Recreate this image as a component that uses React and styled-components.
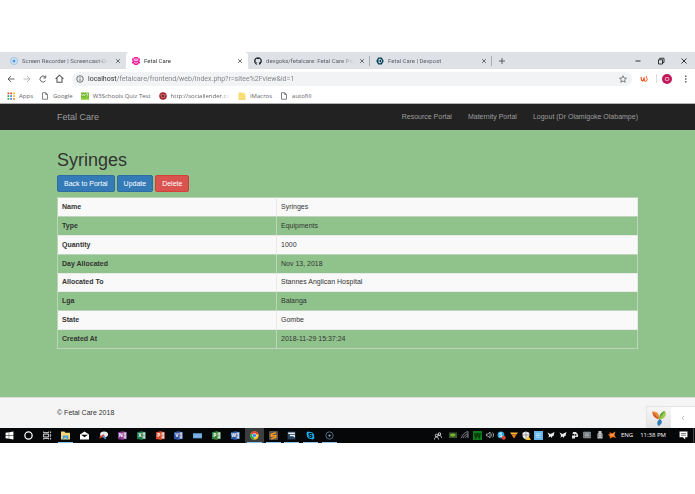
import React from 'react';
import styled, { createGlobalStyle, css } from 'styled-components';
import { FaGithub, FaWindows, FaSkype } from 'react-icons/fa';

const GlobalStyle = createGlobalStyle`
  * {
    box-sizing: border-box;
  }
  body {
    margin: 0;
    background: #fff;
  }
  svg {
    display: block;
    flex: none;
  }
  button {
    margin: 0;
    padding: 0;
    border: 0;
    background: none;
    font: inherit;
    color: inherit;
  }
  a {
    color: inherit;
    text-decoration: none;
  }
`;

const uiFont = '"Open Sans", "Noto Sans", sans-serif';
const narrowFont = 'Roboto, "Open Sans", sans-serif';
const pageFont = '"Liberation Sans", Arial, sans-serif';

const Screen = styled.div`
  display: flex;
  flex-direction: column;
  min-height: 100vh;
  padding: 52px 0 51px;
`;

/* browser window */

const Browser = styled.header`
  font-family: ${uiFont};
  font-size: 6px;
  line-height: 10px;
  color: #5f6368;
  border-bottom: 1px solid #b4b4b4;
`;

const TabStrip = styled.div`
  display: flex;
  align-items: stretch;
  height: 17px;
  padding-left: 4px;
  background: #dee1e6;
  font-family: ${narrowFont};
`;

const Tab = styled.div`
  display: flex;
  align-items: center;
  gap: 4px;
  width: 122px;
  padding: 0 4px 0 6px;
  border-radius: 4px 4px 0 0;
  ${(p) => p.$active && css`
    background: #fff;
    color: #3c4043;
  `}
  ${(p) => p.$divider && css`
    border-radius: 0;
    background: linear-gradient(#a9adb2, #a9adb2) right center / 1px 10px no-repeat;
  `}
`;

const FadeText = styled.span`
  flex: 1;
  min-width: 0;
  white-space: nowrap;
  mask-image: linear-gradient(to right, #000 85%, transparent);
`;

const IconButton = styled.button`
  display: flex;
  align-items: center;
  justify-content: center;
  width: ${(p) => p.$w || 16}px;
  color: ${(p) => p.$color || '#505357'};
`;

const WindowControls = styled.div`
  display: flex;
  margin-left: auto;
`;

const Toolbar = styled.div`
  display: flex;
  align-items: center;
  height: 19px;
  padding-left: 3px;
`;

const AddressBar = styled.div`
  flex: 1;
  display: flex;
  align-items: center;
  gap: 4px;
  height: 14px;
  margin-left: 5px;
  padding: 0 1px 0 4px;
  border-radius: 7px;
  background: #f1f3f4;
`;

/* the host is darker than the path */
const Address = styled.input`
  flex: 1;
  min-width: 0;
  padding: 0;
  border: 0;
  outline: 0;
  background: linear-gradient(to right, #303134 29px, #7d8186 29px);
  background-clip: text;
  font-family: ${narrowFont};
  font-size: 7px;
  line-height: 10px;
  color: transparent;
`;

const Separator = styled.span`
  width: 1px;
  height: 9px;
  background: #dadce0;
`;

const Avatar = styled.span`
  display: flex;
  align-items: center;
  justify-content: center;
  width: 10px;
  height: 10px;
  border-radius: 50%;
  background: #c2185b;
  color: #fff;
`;

const Bookmarks = styled.nav`
  display: flex;
  align-items: center;
  gap: 8px;
  height: 15px;
  padding-left: 7px;
`;

const Bookmark = styled.a`
  display: flex;
  align-items: center;
  gap: 4px;
  white-space: nowrap;
`;

/* site */

const Site = styled.div`
  flex: 1;
  display: flex;
  flex-direction: column;
  background: #90c38b;
  font-family: ${pageFont};
  font-size: 7px;
  line-height: 10px;
  color: #333;
`;

const Navbar = styled.nav`
  display: flex;
  align-items: center;
  gap: 16px;
  height: 26px;
  padding: 0 57px;
  background: #222;
  color: #9d9d9d;
`;

const Brand = styled.a`
  margin-right: auto;
  font-size: 9px;
`;

const Content = styled.main`
  flex: 1;
  padding: 20px 57px;
`;

const Title = styled.h1`
  margin: 0 0 5px;
  font-size: 18px;
  font-weight: 400;
  line-height: 20px;
`;

const Actions = styled.div`
  display: flex;
  gap: 2px;
  margin-bottom: 5px;
`;

const Button = styled.button`
  height: 17px;
  padding: 0 6px;
  border: 1px solid ${(p) => (p.$danger ? '#d43f3a' : '#2e6da4')};
  border-radius: 2px;
  background: ${(p) => (p.$danger ? '#d9534f' : '#337ab7')};
  color: #fff;
`;

const DetailTable = styled.table`
  width: 100%;
  height: 152px;
  border-collapse: collapse;

  th,
  td {
    padding: 0 4px;
    border: 1px solid rgba(221, 221, 221, 0.6);
    text-align: left;
  }
  th {
    width: 219px;
  }
  tr:nth-child(odd) {
    background: #f9f9f9;
  }
`;

const Footer = styled.footer`
  display: flex;
  align-items: flex-end;
  justify-content: space-between;
  height: 31px;
  padding-left: 57px;
  border-top: 1px solid #ddd;
  background: #f5f5f5;
`;

const Copyright = styled.p`
  margin: 0;
  padding-bottom: 10px;
`;

const DebugBar = styled.div`
  display: flex;
  height: 22px;
  border: 1px solid #e4e4e4;
  border-width: 1px 0 0 1px;
  background: #fff;
`;

const DebugLogo = styled.a`
  display: flex;
  align-items: center;
  justify-content: center;
  width: 24px;
  background: linear-gradient(#f7f7f7, #e2e2e2);
`;

/* windows taskbar */

const Taskbar = styled.footer`
  display: flex;
  justify-content: space-between;
  height: 15px;
  background: #060708;
  color: #fff;
  font-family: ${uiFont};
  font-size: 6px;
  line-height: 15px;
`;

const Pinned = styled.div`
  display: grid;
  grid-template-columns: repeat(18, 1fr);
  width: 339px;
`;

const TaskButton = styled.button`
  display: flex;
  align-items: center;
  justify-content: center;
  height: 15px;
  background: ${(p) => (p.$active ? '#3b3d3f' : 'none')};
  ${(p) => p.$open && css`
    background-image: linear-gradient(#8fc3ea, #8fc3ea);
    background-size: 15px 1px;
    background-position: center bottom;
    background-repeat: no-repeat;
  `}
`;

const Tray = styled.div`
  display: flex;
  align-items: center;
`;

const TrayIcons = styled.div`
  display: grid;
  grid-template-columns: repeat(14, 1fr);
  justify-items: center;
  width: 171px;
  margin: 0 3px 0 5px;
`;

const TrayText = styled.span`
  margin-right: 7px;
  white-space: nowrap;
`;

const ShowDesktop = styled.span`
  height: 15px;
  border-left: 1px solid #45484b;
  padding-right: 1px;
`;

const Icon = ({ size = 8, children, ...rest }) => (
  <svg width={size} height={size} viewBox="0 0 16 16" fill="none" aria-hidden="true" {...rest}>
    {children}
  </svg>
);

const Line = (props) => <Icon stroke="currentColor" strokeWidth="1.8" {...props} />;

const CloseIcon = () => (
  <Line size={6} strokeWidth="2.2"><path d="M3 3l10 10M13 3L3 13" /></Line>
);

const PageIcon = () => (
  <Line strokeWidth="1.6"><path d="M3 1.5h6.5L13 5v9.500H3zM9.500 1.500V5H13" /></Line>
);

const RecorderIcon = () => (
  <Icon>
    <circle cx="8" cy="8" r="7" stroke="#8fbbe0" strokeWidth="1.6" fill="#d5e7f5" />
    <circle cx="8" cy="8" r="3" fill="#4a9cdc" />
  </Icon>
);

const FetalIcon = () => (
  <Icon>
    <path d="M4 0h8l1 3h3v3h-1v4h1v3h-3l-2 3H5l-2-3H0v-3h1V6H0V3h3z" fill="#f01e9a" />
    <path d="M4.500 4h7v3h-7z" stroke="#fff" strokeWidth="1.5" />
    <path d="M4.500 10c1 3 6 3 7 0" stroke="#fff" strokeWidth="1.6" />
  </Icon>
);

const DevpostIcon = () => (
  <Icon>
    <path d="M4.500 1h7L15.500 8l-4 7h-7L.5 8z" fill="#003e54" />
    <path d="M6 4.500h2c4.500 0 4.500 7 0 7H6z" stroke="#fff" strokeWidth="1.8" />
  </Icon>
);

const AppsIcon = () => (
  <Icon>
    {['#ea4335', '#ea4335', '#fbbc05', '#34a853', '#4285f4', '#fbbc05', '#34a853', '#4285f4', '#ea8a35'].map((c, i) => (
      <rect key={i} x={1 + (i % 3) * 5.5} y={1 + Math.floor(i / 3) * 5.5} width="3.500" height="3.500" fill={c} />
    ))}
  </Icon>
);

const SchoolsIcon = () => (
  <Icon>
    <path d="M0 1h16v14H0z" fill="#73b72b" />
    <path d="M1 4l2 4 2-4 2 4 2-4M10 3.500h4l-2 2.500c3 0 2 3-1 2.500" stroke="#e8f7d5" strokeWidth="1.3" />
    <path d="M0 11h16v4H0z" fill="#8fd13f" />
  </Icon>
);

const SocialIcon = () => (
  <Icon>
    <circle cx="8" cy="8" r="7.500" fill="#a3242d" />
    <path d="M3 6h10M4 10h8" stroke="#e9c0c2" strokeWidth="1.6" />
    <circle cx="8" cy="8" r="2" fill="#57161b" />
  </Icon>
);

const FolderIcon = () => (
  <Icon><path d="M1 1h9l1.500 2H15v12H1z" fill="#fbdc72" /><path d="M1 14h14v1H1z" fill="#e7bf4c" /></Icon>
);

const ExtensionIcon = () => (
  <Icon>
    <path d="M2 4c1 3 0 7 3 8 3-1 2-4 3-6 1 3 0 6 2 6" stroke="#f4511e" strokeWidth="2.400" />
    <path d="M13 2c-2 3 3 5 1 8-1 2-2 3-4 3" stroke="#ff7043" strokeWidth="2.200" />
  </Icon>
);

const YiiLogo = () => (
  <Icon size={16}>
    <path d="M1.500 1.500C6 1 9 4 8 9 4 8.500 1.500 6 1.500 1.500z" fill="#ee8c34" />
    <path d="M1.500 1.500C3 4 6 6 8 9 4 8.500 1.500 6 1.500 1.500z" fill="#d9532c" />
    <path d="M14 1c2 4-.5 8-5.500 8.500C8 5 10 2 14 1z" fill="#9dc843" />
    <path d="M14 1c-2 3-4 5-5.500 8.500C8 5 10 2 14 1z" fill="#5aa545" />
    <path d="M8.500 9c3.500 1.500 3 5-1 7-2-2-1.500-5 1-7z" fill="#2f7ab8" />
  </Icon>
);

// Office style tile: coloured cover with a letter and a lighter page behind it
const OfficeIcon = ({ color, letter }) => (
  <Icon size={9}>
    <rect x="8" y="2" width="7" height="12" fill="#e9edf2" stroke={color} />
    <path d="M9.500 5.500h4M9.500 8h4M9.500 10.500h4" stroke={color} />
    <path d="M0 2l10-2v16L0 14z" fill={color} />
    <text x="5" y="11.500" fontSize="9" fontWeight="700" textAnchor="middle" fill="#fff">{letter}</text>
  </Icon>
);

const ChromeIcon = () => (
  <Icon size={9}>
    <circle cx="8" cy="8" r="7.500" fill="#fbc116" />
    <path d="M8 8L1.500 4.200A7.500 7.500 0 0 0 7 15.400z" fill="#2da94f" />
    <path d="M8 8L1.500 4.200A7.500 7.500 0 0 1 14.800 5z" fill="#e33b2e" />
    <circle cx="8" cy="8" r="3.800" fill="#fff" />
    <circle cx="8" cy="8" r="2.900" fill="#4285f4" />
  </Icon>
);

const TABS = [
  { title: 'Screen Recorder | Screencast-O-', icon: <RecorderIcon /> },
  { title: 'Fetal Care', icon: <FetalIcon />, active: true },
  { title: 'devgoks/fetalcare: Fetal Care Pro', icon: <FaGithub size={8} color="#24292e" />, divider: true },
  { title: 'Fetal Care | Devpost', icon: <DevpostIcon />, divider: true },
];

const BOOKMARKS = [
  { title: 'Apps', icon: <AppsIcon /> },
  { title: 'Google', icon: <PageIcon /> },
  { title: 'W3Schools Quiz Test', icon: <SchoolsIcon /> },
  { title: 'http://sociallender.co', icon: <SocialIcon />, fade: true },
  { title: 'iMacros', icon: <FolderIcon /> },
  { title: 'autofill', icon: <PageIcon /> },
];

const DETAILS = [
  ['Name', 'Syringes'],
  ['Type', 'Equipments'],
  ['Quantity', '1000'],
  ['Day Allocated', 'Nov 13, 2018'],
  ['Allocated To', 'Stannes Anglican Hospital'],
  ['Lga', 'Balanga'],
  ['State', 'Gombe'],
  ['Created At', '2018-11-29 15:37:24'],
];

const TASKS = [
  { name: 'Start', icon: <FaWindows size={9} /> },
  { name: 'Cortana', icon: <Line size={9} strokeWidth="2.200"><circle cx="8" cy="8" r="6.500" /></Line> },
  { name: 'Task view', icon: <Line size={9} strokeWidth="1.500"><path d="M1 1v2h9V1M1 15v-2h9v2M1 5.500h9v5H1zM13.500 1v3M13.500 6v4M13.500 12v3" /></Line> },
  {
    name: 'File Explorer',
    open: true,
    icon: <Icon size={9}><path d="M0 1h6l2 2h8v12H0z" fill="#f8d775" /><path d="M3 8h10v7h-3v-3H6v3H3z" fill="#4aa3df" /></Icon>,
  },
  {
    name: 'Mail',
    icon: <Icon size={9}><path d="M0 6l8-5 8 5v9H0z" fill="#fff" /><path d="M2 6.500h12L8 11z" fill="#060708" /></Icon>,
  },
  {
    name: 'Snipping Tool',
    icon: <Icon size={9}><ellipse cx="9" cy="6" rx="7" ry="5" fill="#e6ebef" /><path d="M1 12l8-5" stroke="#d8443a" strokeWidth="3" /><path d="M8 9l4 5" stroke="#4d93cf" strokeWidth="3" /></Icon>,
  },
  { name: 'OneNote', icon: <OfficeIcon color="#8a3a96" letter="N" /> },
  { name: 'Excel', icon: <OfficeIcon color="#1f7a47" letter="X" /> },
  { name: 'PowerPoint', icon: <OfficeIcon color="#d84b2b" letter="P" /> },
  { name: 'Visio', icon: <OfficeIcon color="#3355a5" letter="V" /> },
  {
    name: 'Keyboard',
    icon: <Icon size={9}><path d="M0 4h16v9H0z" fill="#6ba6df" /><path d="M2 7h12M2 10h12" stroke="#97c4ee" /></Icon>,
  },
  { name: 'Project', icon: <OfficeIcon color="#36853c" letter="P" /> },
  { name: 'Word', icon: <OfficeIcon color="#2a5aa6" letter="W" /> },
  { name: 'Chrome', icon: <ChromeIcon />, open: true, active: true },
  {
    name: 'Sublime Text',
    open: true,
    icon: <Icon size={9}><rect width="16" height="16" rx="2" fill="#5a544d" /><path d="M12 3L4 6v3l8-1v3l-8 3" stroke="#ff9c1b" strokeWidth="2.600" /></Icon>,
  },
  {
    name: 'Remote Desktop',
    open: true,
    icon: <Icon size={9}><path d="M1 1h14v14H1z" fill="#27425e" /><path d="M2 4h12M5 8h8v3" stroke="#e6edf4" strokeWidth="2.400" /></Icon>,
  },
  { name: 'Skype', icon: <FaSkype size={9} color="#15aff0" />, open: true },
  {
    name: 'Recorder',
    open: true,
    icon: <Icon size={9}><circle cx="8" cy="8" r="6.500" stroke="#5e7f92" strokeWidth="1.500" /><circle cx="8" cy="8" r="2" fill="#86a9bb" /></Icon>,
  },
];

const rocket = <Icon><path d="M1 3l6 3 8-4-2 8-3 1v3l-3-3-4 2 1-4z" fill="#e8eaec" /></Icon>;

const TRAY = [
  <Icon><path d="M0 3h16v11H0z" fill="#3c5530" /><path d="M2 8c3-4 8-4 11 0-3 4-8 4-11 0z" fill="#77b82a" /></Icon>,
  <Line strokeWidth="1.500"><path d="M1 14C2 8 7 3 14 1v13M5 14c0-4 4-7 9-8M9 14c0-2 2-4 5-4" stroke="#9da1a5" /></Line>,
  <Icon size={9}><path d="M0 0h16v16H0z" fill="#0d7d1d" /><path d="M3 4l2 8 3-6 3 6 2-8M5 5h6" stroke="#033c0a" strokeWidth="2.500" /></Icon>,
  <Line strokeWidth="1.500"><path d="M1 6h3l4-4v12l-4-4H1zM10 5c2 2 2 4 0 6M13 3c3 3 3 7 0 10" stroke="#c3c6c9" /></Line>,
  <Icon size={9}><circle cx="7" cy="7" r="6" fill="#2aa6e6" /><path d="M9 4c-5-2-6 2-2 3s2 4-3 2" stroke="#fff" strokeWidth="1.700" /><circle cx="12" cy="12" r="3.500" fill="#e2482d" /></Icon>,
  <Icon><path d="M0 3h16l-3 4H3z" fill="#ffb52e" /><path d="M3 7h10l-4 7H7z" fill="#e57b19" /></Icon>,
  <Icon size={9}><path d="M7 1l6 2v5c0 4-3 6-6 7-3-1-6-3-6-7V3z" fill="#edf0f2" /><path d="M7 2v12M2 7h10" stroke="#5d6267" /><path d="M11 8l5 8H7z" fill="#f7c52b" /></Icon>,
  <Icon size={9}><path d="M0 0h16v16H0z" fill="#64b5ea" /><path d="M3 5h10M3 8h8M3 11h9" stroke="#c9e6f8" strokeWidth="1.500" /></Icon>,
  rocket,
  rocket,
  <Icon><path d="M4 2h6l4 5v5H8v3H2V9h4V6H3z" fill="#dfe2e4" /><circle cx="9" cy="8" r="2" fill="#24282b" /></Icon>,
  <Icon><path d="M1 2h14v12H1z" fill="#6a7176" stroke="#aab0b4" /><path d="M3 6h10M3 9h10M6 3v10M10 3v10" stroke="#c1c6c9" /></Icon>,
  <Icon><path d="M5 0h6v5h2v10H3V5h2z" fill="#cfd3d5" /><path d="M5 7h6v5H5zM6 2h1M9 2h1" stroke="#52575a" /></Icon>,
  <Icon><path d="M3 2l5 3 7-4-2 7 3 6-6-2-6 3-1-5-3-3 4-1z" fill="#f5761f" /><path d="M6 8h5" stroke="#ffd3a8" strokeWidth="1.500" /></Icon>,
];

const App = () => {
  return (
    <Screen>
      <GlobalStyle />

      <Browser>
        <TabStrip>
          {TABS.map((tab) => (
            <Tab key={tab.title} $active={tab.active} $divider={tab.divider}>
              {tab.icon}
              <FadeText>{tab.title}</FadeText>
              <IconButton $w={8} aria-label="Close tab"><CloseIcon /></IconButton>
            </Tab>
          ))}
          <IconButton $w={20} aria-label="New tab"><Line><path d="M8 2v12M2 8h12" /></Line></IconButton>
          <WindowControls>
            <IconButton $w={23} $color="#222" aria-label="Minimize"><Line><path d="M3 8h10" /></Line></IconButton>
            <IconButton $w={23} $color="#222" aria-label="Restore"><Line><path d="M3 5.500h8V14H3zM5.500 5V2.500H14V11h-2.500" /></Line></IconButton>
            <IconButton $w={23} $color="#222" aria-label="Close"><Line><path d="M3 3l10 10M13 3L3 13" /></Line></IconButton>
          </WindowControls>
        </TabStrip>

        <Toolbar>
          <IconButton aria-label="Back"><Line><path d="M15 8H2M8 2L2 8l6 6" /></Line></IconButton>
          <IconButton $color="#b0b3b7" aria-label="Forward"><Line><path d="M1 8h13M8 2l6 6-6 6" /></Line></IconButton>
          <IconButton aria-label="Reload"><Line><path d="M13 11.500A6 6 0 1 1 12.500 4M13.500 1v5h-5" /></Line></IconButton>
          <IconButton aria-label="Home"><Line size={9}><path d="M1 8.500L8 2l7 6.500M3.500 7v7.500h9V7" /></Line></IconButton>
          <AddressBar>
            <Line><circle cx="8" cy="8" r="6.500" /><path d="M8 7v5M8 4v1.500" /></Line>
            <Address aria-label="Address" defaultValue="localhost/fetalcare/frontend/web/index.php?r=sitee%2Fview&id=1" />
            <IconButton aria-label="Bookmark this page">
              <Line strokeWidth="1.400"><path d="M8 1.500l2 4.500 5 .4-3.800 3.200 1.200 4.900L8 12l-4.400 2.500 1.200-4.900L1 6.400 6 6z" /></Line>
            </IconButton>
          </AddressBar>
          <IconButton $w={24} aria-label="Extension"><ExtensionIcon /></IconButton>
          <Separator />
          <IconButton $w={20} aria-label="Profile"><Avatar>O</Avatar></IconButton>
          <IconButton $w={18} aria-label="Menu">
            <Icon><path d="M6 1h3v3H6zM6 6.500h3v3H6zM6 12h3v3H6z" fill="#5f6368" /></Icon>
          </IconButton>
        </Toolbar>

        <Bookmarks>
          {BOOKMARKS.map((item) => (
            <Bookmark key={item.title} href="#">
              {item.icon}
              {item.fade ? <FadeText>{item.title}</FadeText> : item.title}
            </Bookmark>
          ))}
        </Bookmarks>
      </Browser>

      <Site>
        <Navbar>
          <Brand href="#">Fetal Care</Brand>
          <a href="#">Resource Portal</a>
          <a href="#">Maternity Portal</a>
          <button>Logout (Dr Olamigoke Olabampe)</button>
        </Navbar>

        <Content>
          <Title>Syringes</Title>
          <Actions>
            <Button>Back to Portal</Button>
            <Button>Update</Button>
            <Button $danger>Delete</Button>
          </Actions>
          <DetailTable>
            <tbody>
              {DETAILS.map(([label, value]) => (
                <tr key={label}>
                  <th scope="row">{label}</th>
                  <td>{value}</td>
                </tr>
              ))}
            </tbody>
          </DetailTable>
        </Content>

        <Footer>
          <Copyright>© Fetal Care 2018</Copyright>
          <DebugBar>
            <DebugLogo href="#" aria-label="Debugger"><YiiLogo /></DebugLogo>
            <IconButton $w={24} $color="#c4c4c4" aria-label="Toggle toolbar">
              <Line strokeWidth="2"><path d="M10 4L6 8l4 4" /></Line>
            </IconButton>
          </DebugBar>
        </Footer>
      </Site>

      <Taskbar>
        <Pinned>
          {TASKS.map((task) => (
            <TaskButton key={task.name} aria-label={task.name} $open={task.open} $active={task.active}>
              {task.icon}
            </TaskButton>
          ))}
        </Pinned>
        <Tray>
          <Line strokeWidth="1.500"><circle cx="5" cy="7" r="2.500" /><circle cx="11" cy="4" r="2.500" /><path d="M1 15c0-7 8-7 8 0M8 8c4-3 7 0 7 4" /></Line>
          <TrayIcons>
            {TRAY.map((icon, i) => <React.Fragment key={i}>{icon}</React.Fragment>)}
          </TrayIcons>
          <TrayText>ENG</TrayText>
          <TrayText>11:38 PM</TrayText>
          <IconButton $w={20} $color="#fff" aria-label="Notifications">
            <Icon size={9}><path d="M1 1h14v10h-4v4l-4-4H1z" fill="#fff" /><path d="M3.500 4.500h9M3.500 7.500h9" stroke="#222" /></Icon>
          </IconButton>
          <ShowDesktop />
        </Tray>
      </Taskbar>
    </Screen>
  );
};

export default App;
